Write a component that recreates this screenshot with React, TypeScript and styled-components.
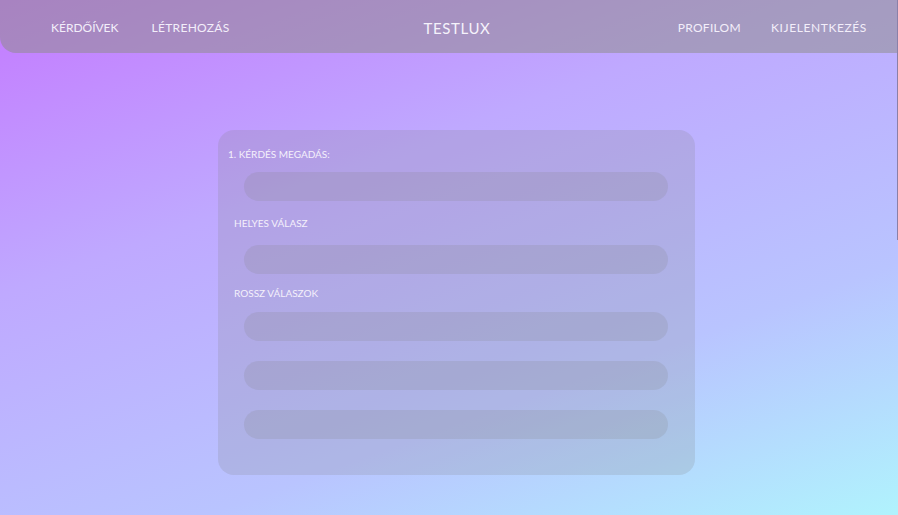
import React from "react";
import styled, { createGlobalStyle } from "styled-components";

const Global = createGlobalStyle`
  html, body { margin: 0; padding: 0; }
  body {
    font-family: "Lato", "Noto Sans", sans-serif;
    min-height: 515px;
    background: linear-gradient(160deg, #c47aff 0%, #bfa9ff 35%, #b9c4ff 70%, #b0f3fd 100%);
    background-attachment: fixed;
  }
  * { box-sizing: border-box; }
`;

const Page = styled.div`
  position: relative;
  width: 898px;
  height: 515px;
  overflow: hidden;
`;

const EdgeLine = styled.div`
  position: absolute;
  right: 0;
  top: 0;
  width: 1px;
  height: 240px;
  background: #8a80a8;
`;

const Nav = styled.nav`
  height: 53px;
  display: flex;
  align-items: center;
  justify-content: space-between;
  padding: 0 31px 0 51px;
  background: rgba(140, 140, 132, 0.5);
  border-bottom-left-radius: 16px;
`;

const NavGroup = styled.div<{ $gap: number; $end?: boolean }>`
  display: flex;
  align-items: center;
  gap: ${(p) => p.$gap}px;
  width: 300px;
  justify-content: ${(p) => (p.$end ? "flex-end" : "flex-start")};
`;

const NavLink = styled.a<{ $spacing?: number }>`
  color: #f3eefa;
  font-size: 12px;
  letter-spacing: ${(p) => p.$spacing ?? 0.3}px;
  text-decoration: none;
  margin-top: 1px;
`;

const Brand = styled.div`
  color: #f5f2fb;
  font-size: 15px;
  letter-spacing: 0.6px;
  margin-top: 2px;
  margin-left: -4px;
`;

const Main = styled.main`
  display: flex;
  justify-content: center;
  padding-top: 77px;
  padding-left: 15px;
`;

const Card = styled.section`
  width: 477px;
  height: 345px;
  border-radius: 16px;
  background: rgba(128, 128, 128, 0.2);
  padding: 18px 27px 0 10px;
  display: flex;
  flex-direction: column;
`;

const Label = styled.div<{ $indent?: number; $top: number }>`
  color: #f4f0fb;
  font-size: 10px;
  letter-spacing: 0;
  line-height: 12px;
  margin-left: ${(p) => p.$indent ?? 0}px;
  margin-top: ${(p) => p.$top}px;
`;

const Field = styled.div<{ $top: number }>`
  height: 29px;
  margin-left: 16px;
  margin-top: ${(p) => p.$top}px;
  border-radius: 15px;
  background: rgba(128, 128, 128, 0.18);
`;

export default function App() {
  return (
    <Page>
      <Global />
      <Nav>
        <NavGroup $gap={33}>
          <NavLink $spacing={0}>KÉRDŐÍVEK</NavLink>
          <NavLink>LÉTREHOZÁS</NavLink>
        </NavGroup>
        <Brand>TESTLUX</Brand>
        <NavGroup $gap={30} $end>
          <NavLink>PROFILOM</NavLink>
          <NavLink $spacing={0.6}>KIJELENTKEZÉS</NavLink>
        </NavGroup>
      </Nav>
      <Main>
        <Card>
          <Label $top={0}>1. KÉRDÉS MEGADÁS:</Label>
          <Field $top={12} />
          <Label $indent={6} $top={16}>HELYES VÁLASZ</Label>
          <Field $top={16} />
          <Label $indent={6} $top={13}>ROSSZ VÁLASZOK</Label>
          <Field $top={13} />
          <Field $top={20} />
          <Field $top={20} />
        </Card>
      </Main>
      <EdgeLine />
    </Page>
  );
}
